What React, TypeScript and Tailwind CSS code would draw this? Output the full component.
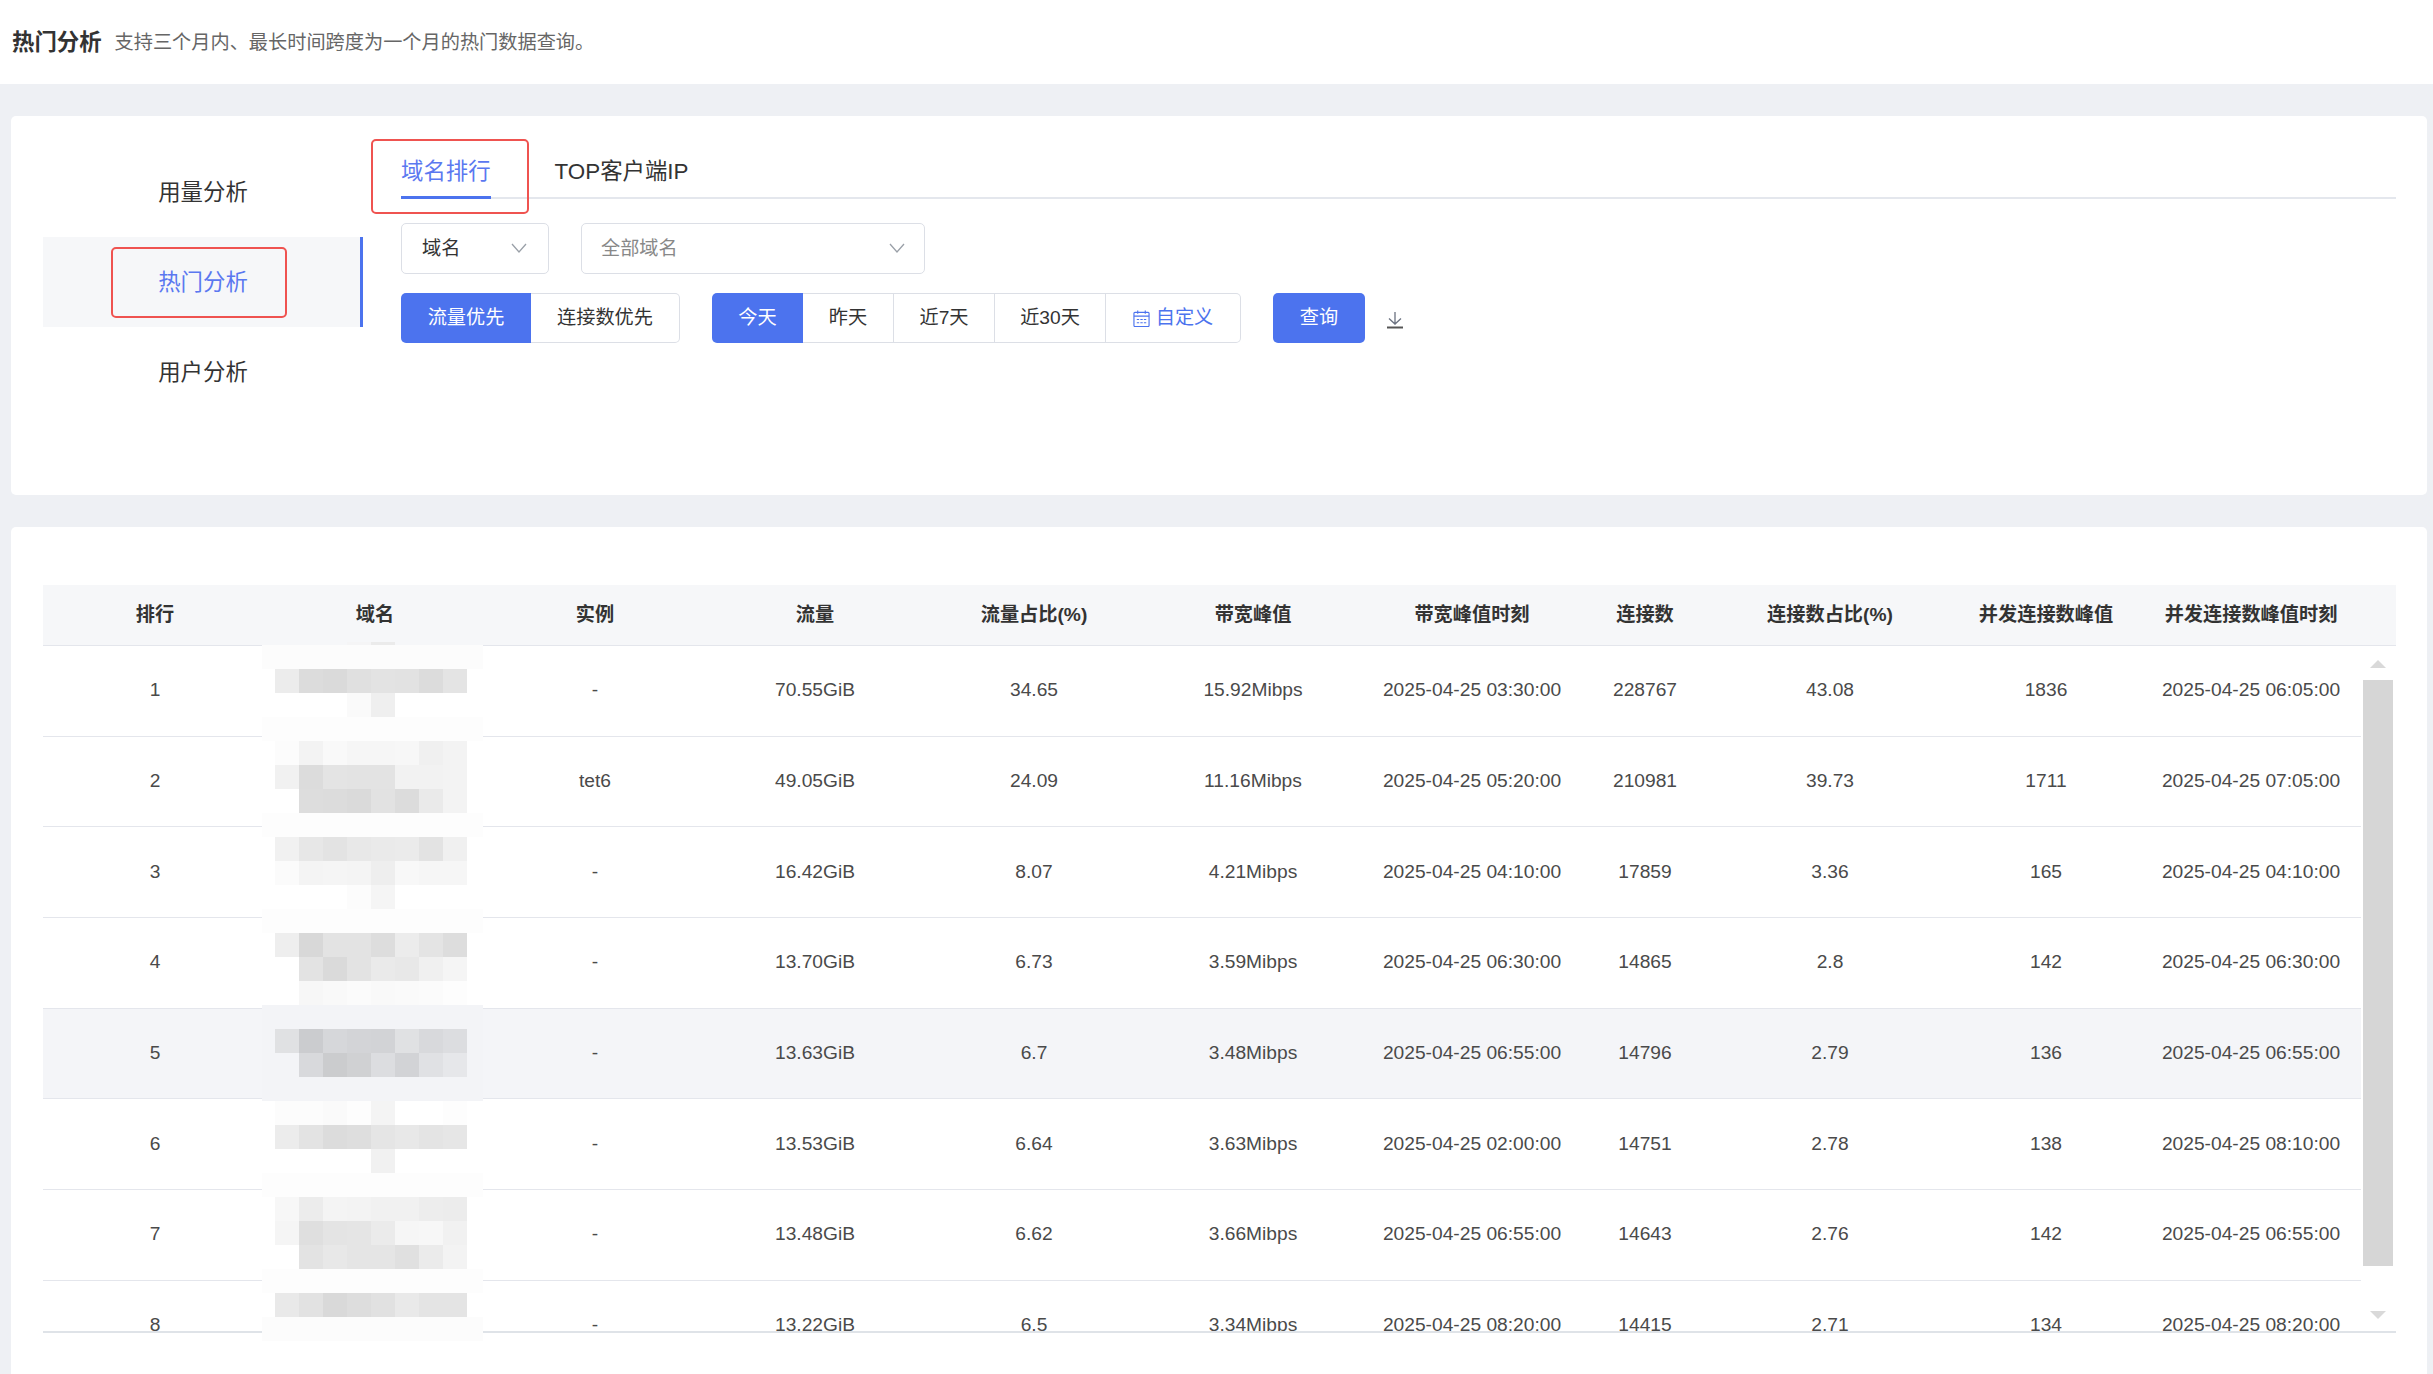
import React from "react";

const columns = ["排行", "域名", "实例", "流量", "流量占比(%)", "带宽峰值", "带宽峰值时刻", "连接数", "连接数占比(%)", "并发连接数峰值", "并发连接数峰值时刻"];

const rows = [
  ["1", "", "-", "70.55GiB", "34.65", "15.92Mibps", "2025-04-25 03:30:00", "228767", "43.08", "1836", "2025-04-25 06:05:00"],
  ["2", "", "tet6", "49.05GiB", "24.09", "11.16Mibps", "2025-04-25 05:20:00", "210981", "39.73", "1711", "2025-04-25 07:05:00"],
  ["3", "", "-", "16.42GiB", "8.07", "4.21Mibps", "2025-04-25 04:10:00", "17859", "3.36", "165", "2025-04-25 04:10:00"],
  ["4", "", "-", "13.70GiB", "6.73", "3.59Mibps", "2025-04-25 06:30:00", "14865", "2.8", "142", "2025-04-25 06:30:00"],
  ["5", "", "-", "13.63GiB", "6.7", "3.48Mibps", "2025-04-25 06:55:00", "14796", "2.79", "136", "2025-04-25 06:55:00"],
  ["6", "", "-", "13.53GiB", "6.64", "3.63Mibps", "2025-04-25 02:00:00", "14751", "2.78", "138", "2025-04-25 08:10:00"],
  ["7", "", "-", "13.48GiB", "6.62", "3.66Mibps", "2025-04-25 06:55:00", "14643", "2.76", "142", "2025-04-25 06:55:00"],
  ["8", "", "-", "13.22GiB", "6.5", "3.34Mibps", "2025-04-25 08:20:00", "14415", "2.71", "134", "2025-04-25 08:20:00"],
];

// 打码区域: one line per 24px band, "band" lines fill the whole width
const mosaic: (string | string[])[] = [
  "#fcfcfc",
  ["#ececec", "#dcdcdc", "#dadada", "#e0e0e0", "#e3e3e3", "#e2e2e2", "#dcdcdc", "#e4e4e4"],
  ["", "", "", "#fafafa", "#efefef", "", "", ""],
  "#fdfdfd",
  ["#fcfcfc", "#f3f3f3", "#f9f9f9", "#f6f6f6", "#f6f6f6", "#f7f7f7", "#f0f0f0", "#f3f3f3"],
  ["#f1f1f1", "#dcdcdc", "#e4e4e4", "#e3e3e3", "#e3e3e3", "#f2f2f2", "#f2f2f2", "#f3f3f3"],
  ["", "#dddddd", "#dcdcdc", "#dadada", "#e2e2e2", "#dcdcdc", "#eaeaea", "#f3f3f3"],
  "#fdfdfd",
  ["#f1f1f1", "#e7e7e7", "#e3e3e3", "#e8e8e8", "#eaeaea", "#ebebeb", "#e3e3e3", "#f0f0f0"],
  ["#fbfbfb", "#f4f4f4", "#f5f5f5", "#f4f4f4", "#eeeeee", "#f8f8f8", "#f6f6f6", "#f6f6f6"],
  ["", "", "", "#fcfcfc", "#f5f5f5", "", "", ""],
  "#fdfdfd",
  ["#eeeeee", "#d8d8d8", "#e3e3e3", "#e3e3e3", "#dddddd", "#ececec", "#e4e4e4", "#dddddd"],
  ["", "#e3e3e3", "#dadada", "#e3e3e3", "#eaeaea", "#e8e8e8", "#f0f0f0", "#f5f5f5"],
  ["", "#f7f7f7", "#f9f9f9", "#fbfbfb", "#f9f9f9", "#fafafa", "#fbfbfb", "#fdfdfd"],
  "#f3f4f7",
  ["#e0e1e3", "#cbcccf", "#d6d7da", "#d3d4d7", "#d2d3d6", "#e0e1e3", "#d8d9dc", "#dcdde0"],
  ["#f3f4f7", "#d8d9dc", "#cbccce", "#d0d1d3", "#dcdde0", "#d2d3d6", "#e0e1e4", "#e6e7ea"],
  "#f3f4f7",
  ["#fcfcfc", "#fcfcfc", "#fafafa", "#fdfdfd", "#f4f4f4", "", "", "#fdfdfd"],
  ["#ececec", "#e3e3e3", "#dcdcdc", "#dedede", "#e5e5e5", "#e8e8e8", "#e4e4e4", "#e6e6e6"],
  ["", "", "", "", "#f1f1f1", "", "", ""],
  "#fdfdfd",
  ["#f7f7f7", "#ececec", "#f4f4f4", "#f3f3f3", "#f1f1f1", "#f1f1f1", "#ededed", "#ececec"],
  ["#f5f5f5", "#dfdfdf", "#e4e4e4", "#e5e5e5", "#ebebeb", "#f6f6f6", "#f7f7f7", "#f1f1f1"],
  ["", "#e3e3e3", "#e8e8e8", "#e5e5e5", "#e5e5e5", "#e0e0e0", "#ebebeb", "#f3f3f3"],
  "#fdfdfd",
  ["#e9e9e9", "#e2e2e2", "#d9d9d9", "#dddddd", "#e1e1e1", "#e9e9e9", "#e4e4e4", "#e4e4e4"],
  "#fcfcfc",
];

function Mosaic() {
  return (
    <svg width="221" height="699" shapeRendering="crispEdges" className="absolute left-[251px] top-[115px]">
      <rect x="85" y="0" width="24" height="3" fill="#f5f5f6" />
      <rect x="109" y="0" width="24" height="3" fill="#ebebeb" />
      <rect x="0" y="3" width="221" height="696" fill="#ffffff" />
      <rect x="0" y="363" width="221" height="96" fill="#f3f4f7" />
      {mosaic.map((line, i) =>
        typeof line === "string" ? (
          <rect key={i} x="0" y={3 + i * 24} width="221" height="24" fill={line} />
        ) : (
          line.map((c, j) =>
            c ? <rect key={j} x={13 + j * 24} y={3 + i * 24} width="24" height="24" fill={c} /> : null
          )
        )
      )}
    </svg>
  );
}

function Chevron() {
  return (
    <svg width="16" height="10" viewBox="0 0 16 10" fill="none" stroke="#9aa0a8" strokeWidth="1.3" className="-mt-[3px]">
      <path d="M1 1l7 8 7-8" />
    </svg>
  );
}

function CalendarIcon() {
  return (
    <svg width="17" height="17" viewBox="0 0 18 18" fill="none" stroke="#4c73ee" strokeWidth="1.2">
      <rect x="1" y="2.5" width="16" height="15" rx="1" />
      <path d="M1 6.5h16M5 .5v3.5M13 .5v3.5" />
      <path d="M4 10h2.5M7.8 10h2.5M11.5 10h2.5M4 13.5h2.5M7.8 13.5h2.5M11.5 13.5h2.5" />
    </svg>
  );
}

function DownloadIcon() {
  return (
    <svg width="18" height="18" viewBox="0 0 18 18" fill="none" className="ml-[21px] mt-[18px]">
      <path d="M9 1v11.5M3 7.5l6 5.500 6-5.500" stroke="#6b7280" strokeWidth="1.3" />
      <path d="M1 16.500h16" stroke="#555" strokeWidth="2" />
    </svg>
  );
}

function App() {
  return (
    <div className="w-full h-[1374px] overflow-hidden bg-[#eef0f4] text-[#333] font-['Liberation_Sans','Noto_Sans_CJK_SC',sans-serif]">
      <div className="h-[84px] bg-white flex items-center pl-[12px] pt-[2px] gap-[13px]">
        <span className="text-[22.4px] font-bold">热门分析</span>
        <span className="text-[19.2px] text-[#666]">支持三个月内、最长时间跨度为一个月的热门数据查询。</span>
      </div>

      <div className="flex flex-col gap-[32px] pt-[32px] pl-[11px] pr-[6px]">
        <div className="h-[379px] bg-white rounded-[5px] flex pl-[32px] pr-[31px]">
          <div className="w-[320px] mt-[31px] text-[22.4px]">
            <div className="h-[90px] flex items-center justify-center pt-[2px]">用量分析</div>
            <div className="relative h-[90px] flex items-center justify-center pl-[3px] pt-[1px] bg-[#f6f7f9] border-r-[3px] border-[#4c73ee] text-[#5b78f0]">
              热门分析
              <div className="absolute left-[68px] top-[10px] w-[176px] h-[71px] border-2 border-[#ef5350] rounded-[5px]" />
            </div>
            <div className="h-[90px] flex items-center justify-center pt-[1px]">用户分析</div>
          </div>

          <div className="flex-1 ml-[38px] mt-[27px]">
            <div className="flex gap-[64px] h-[56px] text-[22.4px] shadow-[inset_0_-2px_0_#e4e7ed]">
              <div className="relative h-[56px] pt-[15px] leading-[28px] text-[#5b78f0]">
                域名排行
                <div className="absolute left-0 right-0 bottom-0 h-[3px] bg-[#4c73ee]" />
                <div className="absolute -left-[30px] -top-[4px] w-[158px] h-[75px] border-2 border-[#ef5350] rounded-[5px]" />
              </div>
              <div className="h-[56px] pt-[15px] leading-[28px]">TOP客户端IP</div>
            </div>

            <div className="flex gap-[32px] mt-[24px] text-[19.2px]">
              <div className="w-[148px] h-[51px] border border-[#dcdfe6] rounded-[5px] flex items-center justify-between pl-[20px] pr-[21px] pt-[2px]">
                域名
                <Chevron />
              </div>
              <div className="w-[344px] h-[51px] border border-[#dcdfe6] rounded-[5px] flex items-center justify-between pl-[19px] pr-[19px] pt-[2px] text-[#888]">
                全部域名
                <Chevron />
              </div>
            </div>

            <div className="flex mt-[19px] text-[19.2px]">
              <div className="flex h-[50px] text-center leading-[50px]">
                <div className="w-[130px] bg-[#4c73ee] text-white rounded-l-[5px]">流量优先</div>
                <div className="w-[149px] border border-l-0 border-[#dcdfe6] rounded-r-[5px] leading-[48px]">连接数优先</div>
              </div>
              <div className="flex h-[50px] ml-[32px] text-center leading-[48px]">
                <div className="w-[91px] bg-[#4c73ee] text-white rounded-l-[5px] leading-[50px]">今天</div>
                <div className="w-[91px] border border-l-0 border-[#dcdfe6]">昨天</div>
                <div className="w-[101px] border border-l-0 border-[#dcdfe6]">近7天</div>
                <div className="w-[111px] border border-l-0 border-[#dcdfe6]">近30天</div>
                <div className="w-[135px] border border-l-0 border-[#dcdfe6] rounded-r-[5px] text-[#4c73ee] flex items-center justify-center gap-[6px]">
                  <CalendarIcon />
                  自定义
                </div>
              </div>
              <div className="w-[92px] h-[50px] ml-[32px] bg-[#4c73ee] text-white rounded-[5px] text-center leading-[50px]">查询</div>
              <DownloadIcon />
            </div>
          </div>
        </div>

        <div className="relative h-[900px] bg-white rounded-[5px] pt-[58px] pl-[32px] pr-[31px]">
          <div className="grid grid-cols-[224px_216px_224px_216px_222px_216px_222px_124px_246px_186px_224px] h-[61px] items-center bg-[#f6f7f9] border-b border-[#e4e6ec] text-[19.2px] font-bold text-center">
            {columns.map((c) => (
              <div key={c}>{c}</div>
            ))}
          </div>

          <div className="relative h-[687px] overflow-hidden border-b-2 border-[#dfe3e8]">
            {rows.map((row, i) => (
              <div
                key={row[0]}
                className={`grid grid-cols-[224px_216px_224px_216px_222px_216px_222px_124px_246px_186px_224px] w-[2318px] h-[90.67px] items-center border-b border-[#e4e6ec] text-[19.2px] text-[#4a4a4a] text-center ${i === 4 ? "bg-[#f4f5f8]" : ""}`}
              >
                {row.map((v, j) => (
                  <div key={j}>{v}</div>
                ))}
              </div>
            ))}

            <div className="absolute left-[2320px] top-0 w-[30px] h-full">
              <div className="absolute left-[7px] top-[14px] w-0 h-0 border-x-[8px] border-x-transparent border-b-[8px] border-b-[#d9d9d9]" />
              <div className="absolute left-0 top-[34px] w-[30px] h-[586px] bg-[#d6d6d6]" />
              <div className="absolute left-[7px] top-[665px] w-0 h-0 border-x-[8px] border-x-transparent border-t-[8px] border-t-[#d9d9d9]" />
            </div>
          </div>

          <Mosaic />
        </div>
      </div>
    </div>
  );
}

export default App;
